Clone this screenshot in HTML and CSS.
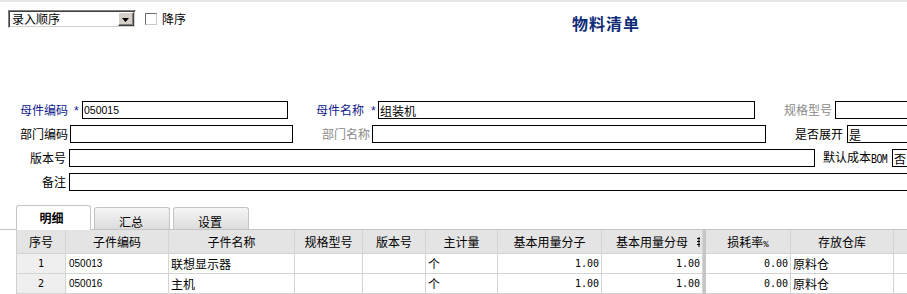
FILE: index.html
```html
<!DOCTYPE html>
<html lang="zh-CN">
<head>
<meta charset="utf-8">
<title>物料清单</title>
<link rel="stylesheet" href="styles.css">
</head>
<body>
<div class="topline"></div>
<div class="toolbar">
  <div class="select">
    <span class="select-text">录入顺序</span>
    <span class="select-btn"><svg width="7" height="4" viewBox="0 0 7 4"><path d="M0 0H7L3.5 4Z" fill="#000"/></svg></span>
  </div>
  <label class="check"><span class="box"></span><span class="check-text">降序</span></label>
  <h1 class="title">物料清单</h1>
</div>

<div class="form">
  <div class="row">
    <span class="lbl req w-r1a">母件编码</span><span class="star">*</span>
    <input class="inp w-i1a" value="050015">
    <span class="lbl req gap28 w-r1b">母件名称</span><span class="star star2">*</span>
    <input class="inp w-i1b" value="组装机">
    <span class="lbl muted gap29 w-r1c">规格型号</span>
    <input class="inp w-end" value="">
  </div>
  <div class="row">
    <span class="lbl w-r2a">部门编码</span>
    <input class="inp w-i2a" value="">
    <span class="lbl muted gap29 w-r2b">部门名称</span>
    <input class="inp w-i2b" value="">
    <span class="lbl gap29 w-r2c">是否展开</span>
    <input class="inp w-end" value="是">
  </div>
  <div class="row row-wide">
    <span class="lbl lbl-right">版本号</span>
    <input class="inp w-i3a" value="">
    <span class="lbl gap8 w-r3b">默认成本<span class="bom">BOM</span></span>
    <input class="inp w-end" value="否">
  </div>
  <div class="row row-wide">
    <span class="lbl lbl-right">备注</span>
    <input class="inp w-full" value="">
  </div>
</div>

<div class="tabs">
  <div class="tab active">明细</div>
  <div class="tab">汇总</div>
  <div class="tab">设置</div>
</div>

<div class="grid">
  <div class="c h">序号</div>
  <div class="c h">子件编码</div>
  <div class="c h">子件名称</div>
  <div class="c h">规格型号</div>
  <div class="c h">版本号</div>
  <div class="c h">主计量</div>
  <div class="c h">基本用量分子</div>
  <div class="c h">基本用量分母<svg class="frag" width="3" height="10" viewBox="0 0 3 10"><path d="M0 1.5H3M0 4.5H3M0 7.5H3M2 0V10" stroke="#000" stroke-width="1" fill="none"/></svg></div>
  <div class="split"></div>
  <div class="c h">损耗率<span class="pct">%</span></div>
  <div class="c h">存放仓库</div>
  <div class="c h"></div>

  <div class="c idx">1</div>
  <div class="c code">050013</div>
  <div class="c txt">联想显示器</div>
  <div class="c"></div>
  <div class="c"></div>
  <div class="c txt">个</div>
  <div class="c num">1.00</div>
  <div class="c num">1.00</div>
  <div class="split"></div>
  <div class="c num">0.00</div>
  <div class="c txt">原料仓</div>
  <div class="c"></div>

  <div class="c idx">2</div>
  <div class="c code">050016</div>
  <div class="c txt">主机</div>
  <div class="c"></div>
  <div class="c"></div>
  <div class="c txt">个</div>
  <div class="c num">1.00</div>
  <div class="c num">1.00</div>
  <div class="split"></div>
  <div class="c num">0.00</div>
  <div class="c txt">原料仓</div>
  <div class="c"></div>
</div>
</body>
</html>
```
FILE: styles.css
```css
html, body {
  margin: 0;
  padding: 0;
  overflow: hidden;
  background: #fff;
}
body {
  width: 907px;
  height: 294px;
  font-family: "Noto Sans CJK SC", "Liberation Sans", sans-serif;
  font-size: 12px;
  line-height: 16px;
  color: #000;
}

.topline {
  height: 2px;
  background: #e6e6e6;
}

/* toolbar */
.toolbar {
  display: flex;
  align-items: flex-start;
  height: 97px;
  padding: 8px 0 0 8px;
  box-sizing: border-box;
}
.select {
  display: flex;
  align-items: stretch;
  width: 128px;
  height: 18px;
  box-sizing: border-box;
  border: 1px solid;
  border-color: #808080 #ffffff #ffffff #808080;
  box-shadow: inset 1px 1px 0 #404040, inset -1px -1px 0 #d4d0c8;
  background: #fff;
  padding: 1px;
}
.select-text {
  flex: 1;
  padding-left: 2px;
  line-height: 14px;
  font-size: 12px;
}
.select-btn {
  width: 16px;
  box-sizing: border-box;
  background: #d4d0c8;
  border: 1px solid;
  border-color: #ffffff #404040 #404040 #ffffff;
  box-shadow: inset -1px -1px 0 #808080;
  display: flex;
  align-items: center;
  justify-content: center;
}
.select-btn svg { display: block; margin: 1px 1px 0 0; }

.check {
  display: flex;
  align-items: center;
  margin: 1px 0 0 9px;
  height: 16px;
}
.box {
  width: 12px;
  height: 12px;
  box-sizing: border-box;
  border: 1px solid;
  border-color: #6e6e6e #c8c8c8 #c8c8c8 #6e6e6e;
  background: #fff;
}
.check-text {
  margin-left: 5px;
}

.title {
  margin: 3px 0 0 386px;
  font-size: 16px;
  line-height: 20px;
  font-weight: bold;
  color: #0d2c78;
  letter-spacing: 1px;
}

/* form */
.form {
  padding-top: 2px;
}
.row {
  display: flex;
  align-items: center;
  height: 18px;
  margin-bottom: 6px;
  padding-left: 20px;
  white-space: nowrap;
}
.row-wide { padding-left: 0; }
.lbl {
  display: block;
  flex: none;
  line-height: 18px;
}
.req { color: #10188a; }
.muted { color: #8a8a8a; }
.star {
  flex: none;
  width: 8px;
  color: #10188a;
  font-family: "Liberation Sans", sans-serif;
  font-size: 12px;
  line-height: 18px;
  padding-top: 2px;
  box-sizing: border-box;
}
.star2 { width: 7px; }
.lbl-right {
  width: 69px;
  text-align: right;
  padding-right: 3px;
  box-sizing: border-box;
}
.gap28 { margin-left: 28px; }
.gap29 { margin-left: 29px; }
.gap8 { margin-left: 8px; }

.w-r1a { width: 54px; }
.w-r1b { width: 55px; }
.w-r1c { width: 51px; }
.w-r2a { width: 50px; }
.w-r2b { width: 50px; }
.w-r2c { width: 52px; }
.w-r3b { width: 69px; }

.inp {
  flex: none;
  height: 18px;
  box-sizing: border-box;
  border: 1px solid #000;
  border-radius: 0;
  margin: 0;
  padding: 0 1px;
  background: #fff;
  font-family: "Liberation Sans", "Noto Sans CJK SC", sans-serif;
  font-size: 10.5px;
  color: #000;
  outline: none;
}
.w-i1a { width: 206px; }
.w-i1b { width: 377px; font-family: "Noto Sans CJK SC", sans-serif; font-size: 12px; }
.w-i2a { width: 223px; }
.w-i2b { width: 394px; }
.w-i3a { width: 746px; }
.w-end { width: 200px; font-family: "Noto Sans CJK SC", sans-serif; font-size: 12px; }
.w-full { width: 900px; }

.bom {
  display: inline-block;
  font-family: "Liberation Mono", monospace;
  font-size: 10px;
  letter-spacing: -0.6px;
  transform: scaleY(1.25);
}

/* tabs */
.tabs {
  display: flex;
  align-items: flex-end;
  height: 24px;
  margin-top: 14px;
  padding-left: 16px;
  border-bottom: 1px solid #c4c4c4;
}
.tab {
  width: 76px;
  height: 22px;
  margin-left: 3px;
  box-sizing: border-box;
  border: 1px solid #c4c4c4;
  border-bottom: none;
  border-radius: 3px 3px 0 0;
  background: linear-gradient(#f6f6f6, #dcdcdc);
  text-align: center;
  padding: 6px 2px 0 0;
  line-height: 15px;
}
.tab.active {
  width: 75px;
  height: 25px;
  margin-left: 0;
  margin-bottom: -1px;
  background: #fff;
  font-weight: bold;
  padding: 4px 4px 0 0;
}

/* grid */
.grid {
  display: grid;
  grid-template-columns: 49px 103px 126px 68px 63px 72px 104px 101px 3px 85px 103px 60px;
  grid-template-rows: 24px 20px 20px;
  width: max-content;
  margin-left: 16px;
  border-left: 1px solid #d0d0d0;
}
.c {
  box-sizing: border-box;
  border-right: 1px solid #d4d4d4;
  border-bottom: 1px solid #d4d4d4;
  line-height: 19px;
  white-space: nowrap;
  overflow: hidden;
  background: #fff;
}
.h {
  background: #e4e4e4;
  text-align: center;
  line-height: 23px;
  position: relative;
}
.frag {
  position: absolute;
  right: 2px;
  top: 7px;
}
.pct {
  font-family: "Liberation Mono", monospace;
  font-size: 9px;
}
.split {
  background: #c6c6c6;
}
.idx {
  background: #efefef;
  text-align: center;
  font-family: "DejaVu Sans Mono", monospace;
  font-size: 10px;
}
.code {
  padding-left: 3px;
  font-family: "Liberation Sans", sans-serif;
  font-size: 10px;
}
.txt {
  padding-left: 2px;
}
.num {
  text-align: right;
  padding-right: 2px;
  font-family: "DejaVu Sans Mono", monospace;
  font-size: 10px;
}
```
